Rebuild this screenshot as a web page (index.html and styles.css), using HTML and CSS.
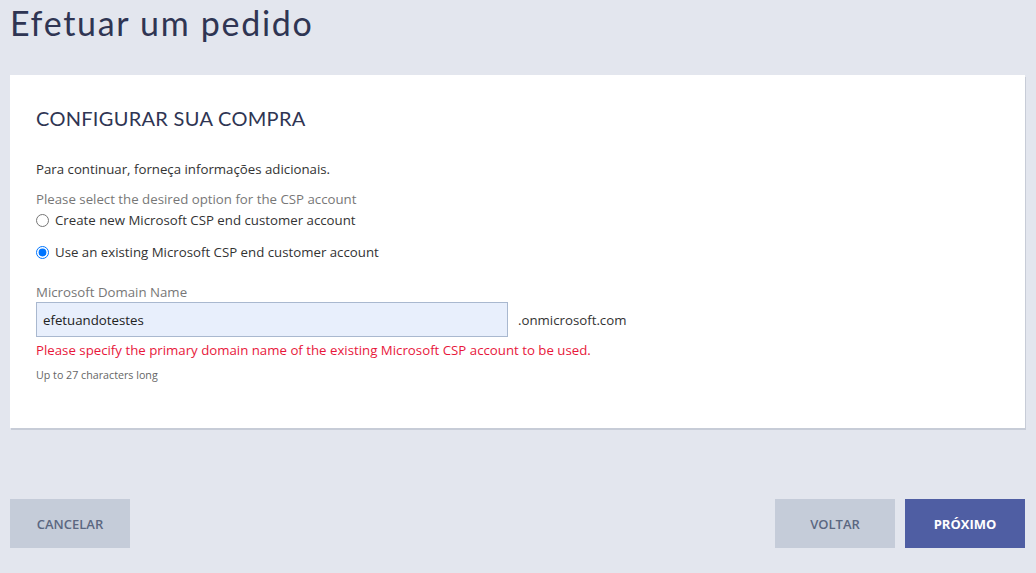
FILE: index.html
```html
<!DOCTYPE html>
<html lang="pt">
<head>
<meta charset="utf-8">
<title>Efetuar um pedido</title>
<link rel="stylesheet" href="styles.css">
</head>
<body>
<div class="page">
  <h1 class="page-title">Efetuar um pedido</h1>
  <section class="card">
    <h2 class="card-title">CONFIGURAR SUA COMPRA</h2>
    <p class="intro">Para continuar, forneça informações adicionais.</p>
    <div class="field-label">Please select the desired option for the CSP account</div>
    <label class="radio-row first"><input type="radio" name="acc"><span>Create new Microsoft CSP end customer account</span></label>
    <label class="radio-row second"><input type="radio" name="acc" checked><span>Use an existing Microsoft CSP end customer account</span></label>
    <div class="field-label domain-label">Microsoft Domain Name</div>
    <div class="domain-row">
      <input class="domain-input" type="text" value="efetuandotestes">
      <span class="suffix">.onmicrosoft.com</span>
    </div>
    <div class="error">Please specify the primary domain name of the existing Microsoft CSP account to be used.</div>
    <div class="hint">Up to 27 characters long</div>
  </section>
  <div class="actions">
    <button class="btn btn-grey">CANCELAR</button>
    <div class="actions-right">
      <button class="btn btn-grey">VOLTAR</button>
      <button class="btn btn-primary">PRÓXIMO</button>
    </div>
  </div>
</div>
</body>
</html>
```
FILE: styles.css
```css
html, body {
  margin: 0;
  padding: 0;
  background: #e3e6ee;
}
body {
  font-family: "Open Sans", "Noto Sans", sans-serif;
  color: #333;
}
.page {
  padding: 0 11px 0 10px;
  height: 573px;
  box-sizing: border-box;
  display: flex;
  flex-direction: column;
}
.page-title {
  margin: 0;
  font-family: "Lato", "Noto Sans", sans-serif;
  font-weight: 400;
  font-size: 34px;
  line-height: 46px;
  color: #2f3553;
  letter-spacing: 1.7px;
}
.card {
  margin-top: 29px;
  background: #fff;
  box-shadow: 1px 2px 0 #c7ccd7;
  padding: 30px 26px 41px;
  height: 353px;
  box-sizing: border-box;
}
.card-title {
  margin: 0;
  font-family: "Lato", "Noto Sans", sans-serif;
  font-weight: 400;
  font-size: 20px;
  line-height: 26px;
  color: #2f3553;
  letter-spacing: 0.3px;
}
.intro {
  margin: 29px 0 0;
  font-size: 13.25px;
  line-height: 18px;
  color: #333;
}
.field-label {
  margin-top: 12px;
  font-size: 13.25px;
  line-height: 18px;
  color: #777;
}
.radio-row {
  display: flex;
  align-items: center;
  font-size: 13.25px;
  line-height: 18px;
  color: #333;
}
.radio-row input {
  margin: 0 6px 0 0;
  width: 13px;
  height: 13px;
}
.radio-row.first { margin-top: 3px; }
.radio-row.second { margin-top: 14px; }
.domain-label { margin-top: 22px; }
.domain-row {
  display: flex;
  align-items: center;
  margin-top: 1px;
}
.domain-input {
  width: 472px;
  height: 35px;
  box-sizing: border-box;
  border: 1px solid #a9b8cf;
  background: #e8effc;
  padding: 0 6px;
  font-family: "Open Sans", "Noto Sans", sans-serif;
  font-size: 13.25px;
  color: #222;
  outline: none;
}
.suffix {
  margin-left: 10px;
  font-size: 13.25px;
  color: #333;
}
.error {
  margin-top: 4px;
  font-size: 13.25px;
  line-height: 18px;
  color: #e8173b;
}
.hint {
  margin-top: 9px;
  font-size: 10.7px;
  line-height: 14px;
  color: #666;
}
.actions {
  margin-top: auto;
  margin-bottom: 25px;
  display: flex;
  justify-content: space-between;
}
.actions-right {
  display: flex;
  gap: 10px;
}
.btn {
  width: 120px;
  height: 49px;
  border: none;
  font-family: "Open Sans", "Noto Sans", sans-serif;
  font-size: 13px;
  font-weight: 600;
  cursor: pointer;
}
.btn-grey {
  background: #c5ccd9;
  color: #5b6781;
}
.btn-primary {
  background: #4f5ea3;
  color: #fff;
  font-weight: 700;
}
```
